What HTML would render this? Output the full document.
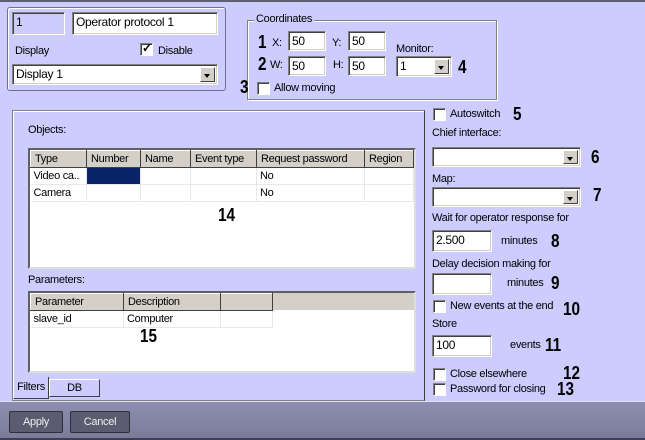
<!DOCTYPE html>
<html><head><meta charset="utf-8"><style>
*{box-sizing:border-box;margin:0;padding:0}
body{width:645px;height:440px;overflow:hidden;background:#ccccff;font-family:"Liberation Sans",Arial,sans-serif;font-size:11px;letter-spacing:-0.3px;color:#000;position:relative}
.a{position:absolute;white-space:nowrap}
.in{position:absolute;background:#fff;border:1px solid #808080;border-right-color:#fff;border-bottom-color:#fff;box-shadow:inset 1px 1px 0 #404040,inset -1px -1px 0 #d4d0c8;padding:2px 3px;line-height:14px;font-size:12px}
.dd{position:absolute;right:2px;top:2px;bottom:2px;width:15px;background:#d4d0c8;border:1px solid;border-color:#fff #404040 #404040 #fff}
.dd:after{content:"";position:absolute;left:3px;top:6px;border:3.5px solid transparent;border-top:4px solid #000}
.cb{position:absolute;width:13px;height:13px;background:#fff;border:1px solid #808080;border-right-color:#fff;border-bottom-color:#fff;box-shadow:inset 1px 1px 0 #404040}
.n{position:absolute;font-weight:bold;font-size:18px;line-height:18px;letter-spacing:0;transform:scaleX(0.85);transform-origin:left}
table{border-collapse:collapse;font-size:11px;table-layout:fixed}
th{background:#d4d0c8;font-weight:normal;text-align:left;padding:0 4px;height:17px;border:1px solid;border-color:#fff #404040 #404040 #fff;overflow:hidden;white-space:nowrap}
td{height:17px;padding:0 3px;border-right:1px solid #e8e8e8;border-bottom:1px solid #e8e8e8;overflow:hidden;white-space:nowrap}
.btn{position:absolute;top:411px;height:22px;background:#5c5c70;border:1px solid #30303c;border-radius:2px;color:#eee;text-align:center;line-height:20px}
</style></head><body>
<div class="a" style="left:0;top:0;width:645px;height:2px;background:#606070"></div>
<div class="a" style="left:7px;top:7px;width:219px;height:84px;border:1px solid #70708c;border-radius:3px;box-shadow:1px 1px 0 #fff inset"></div>
<div class="in" style="left:12px;top:12px;width:53px;height:23px;background:#ccccff">1</div>
<div class="in" style="left:72px;top:12px;width:146px;height:23px">Operator protocol 1</div>
<div class="a" style="left:15px;top:45px">Display</div>
<div class="cb" style="left:140px;top:43px"><span style="position:absolute;left:1px;top:-3px;font-size:12px;font-weight:bold">✓</span></div>
<div class="a" style="left:158px;top:45px">Disable</div>
<div class="in" style="left:12px;top:64px;width:206px;height:21px">Display 1<div class="dd"></div></div>

<div class="a" style="left:247px;top:20px;width:250px;height:80px;border:1px solid #808080;box-shadow:1px 1px 0 #fff inset,1px 1px 0 #fff"></div>
<div class="a" style="left:254px;top:13px;background:#ccccff;padding:0 2px">Coordinates</div>
<div class="n" style="left:258px;top:33px">1</div><div class="a" style="left:272px;top:37px">X:</div>
<div class="in" style="left:288px;top:31px;width:38px;height:20px">50</div>
<div class="a" style="left:332px;top:37px">Y:</div>
<div class="in" style="left:348px;top:31px;width:38px;height:20px">50</div>
<div class="a" style="left:396px;top:43px">Monitor:</div>
<div class="n" style="left:258px;top:55px">2</div><div class="a" style="left:270px;top:59px">W:</div>
<div class="in" style="left:288px;top:56px;width:38px;height:20px">50</div>
<div class="a" style="left:333px;top:59px">H:</div>
<div class="in" style="left:348px;top:56px;width:38px;height:20px">50</div>
<div class="in" style="left:396px;top:56px;width:56px;height:21px">1<div class="dd"></div></div>
<div class="n" style="left:458px;top:58px">4</div>
<div class="n" style="left:240px;top:78px">3</div>
<div class="cb" style="left:257px;top:82px"></div>
<div class="a" style="left:274px;top:82px">Allow moving</div>

<div class="a" style="left:12px;top:110px;width:413px;height:291px;border:1px solid #808080;border-right-color:#404040;box-shadow:1px 1px 0 #fff inset"></div>
<div class="a" style="left:28px;top:124px">Objects:</div>
<div class="a" style="left:28px;top:148px;width:388px;height:121px;background:#fff;border:2px solid #606060;border-right-color:#ddd;border-bottom-color:#ddd">
<table style="width:384px"><colgroup><col style="width:56px"><col style="width:54px"><col style="width:50px"><col style="width:66px"><col style="width:108px"><col></colgroup>
<tr><th>Type</th><th>Number</th><th>Name</th><th>Event type</th><th>Request password</th><th>Region</th></tr>
<tr><td>Video ca..</td><td style="background:#0a246a"></td><td></td><td></td><td>No</td><td></td></tr>
<tr><td>Camera</td><td></td><td></td><td></td><td>No</td><td></td></tr></table></div>
<div class="n" style="left:218px;top:206px">14</div>
<div class="a" style="left:28px;top:274px">Parameters:</div>
<div class="a" style="left:28px;top:291px;width:388px;height:82px;background:#fff;border:2px solid #606060;border-right-color:#ddd;border-bottom-color:#ddd">
<div style="position:absolute;left:0;top:0;right:0;height:17px;background:#d4d0c8"></div>
<table style="position:relative;width:242px"><colgroup><col style="width:93px"><col style="width:97px"><col style="width:52px"></colgroup><tr><th>Parameter</th><th>Description</th><th></th></tr>
<tr><td>slave_id</td><td>Computer</td><td></td></tr></table></div>
<div class="n" style="left:140px;top:327px">15</div>
<div class="a" style="left:49px;top:379px;width:51px;height:18px;border:1px solid #404040;border-top-color:#fff;border-left-color:#fff;text-align:center;line-height:16px">DB</div>
<div class="a" style="left:13px;top:377px;width:36px;height:22px;border:1px solid #404040;border-top:none;border-left-color:#fff;background:#ccccff;text-align:center;line-height:20px">Filters</div>

<div class="cb" style="left:433px;top:108px"></div><div class="a" style="left:450px;top:108px">Autoswitch</div><div class="n" style="left:513px;top:105px">5</div>
<div class="a" style="left:432px;top:127px">Chief interface:</div>
<div class="in" style="left:432px;top:147px;width:149px;height:20px"><div class="dd"></div></div><div class="n" style="left:591px;top:148px">6</div>
<div class="a" style="left:432px;top:173px">Map:</div>
<div class="in" style="left:432px;top:187px;width:149px;height:20px"><div class="dd"></div></div><div class="n" style="left:593px;top:186px">7</div>
<div class="a" style="left:432px;top:212px">Wait for operator response for</div>
<div class="in" style="left:432px;top:230px;width:60px;height:22px">2.500</div>
<div class="a" style="left:501px;top:235px">minutes</div><div class="n" style="left:551px;top:232px">8</div>
<div class="a" style="left:432px;top:258px">Delay decision making for</div>
<div class="in" style="left:432px;top:273px;width:60px;height:22px"></div>
<div class="a" style="left:507px;top:277px">minutes</div><div class="n" style="left:551px;top:274px">9</div>
<div class="cb" style="left:433px;top:300px"></div><div class="a" style="left:450px;top:300px">New events at the end</div><div class="n" style="left:563px;top:300px">10</div>
<div class="a" style="left:432px;top:318px">Store</div>
<div class="in" style="left:432px;top:335px;width:60px;height:22px">100</div>
<div class="a" style="left:510px;top:339px">events</div><div class="n" style="left:545px;top:336px">11</div>
<div class="cb" style="left:433px;top:368px"></div><div class="a" style="left:450px;top:368px">Close elsewhere</div><div class="n" style="left:563px;top:364px">12</div>
<div class="cb" style="left:433px;top:383px"></div><div class="a" style="left:450px;top:383px">Password for closing</div><div class="n" style="left:557px;top:380px">13</div>

<div class="a" style="left:0;top:401px;width:645px;height:39px;background:linear-gradient(#8e8eb0,#7a7a98);border-top:1px solid #e0e0f0"></div>
<div class="a" style="left:0;top:438px;width:645px;height:2px;background:#404050"></div>
<div class="btn" style="left:9px;width:54px">Apply</div>
<div class="btn" style="left:70px;width:60px">Cancel</div>
</body></html>
